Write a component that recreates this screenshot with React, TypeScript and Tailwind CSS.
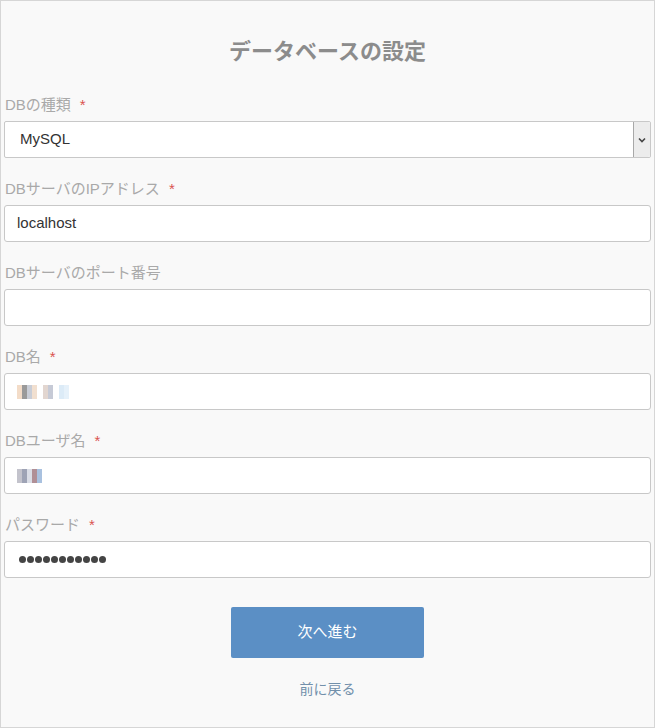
import { ReactNode } from "react";

const font = { fontFamily: '"Liberation Sans", "Noto Sans CJK JP", sans-serif' };

function Field({ label, required, children }: { label: string; required?: boolean; children: ReactNode }) {
  return (
    <div className="mb-[21px]">
      <div className="h-[20px] leading-[20px] text-[15px] text-[#a9a9a9] mb-[6px] pl-[1px]">
        {label}
        {required && <span className="ml-[9px] text-[#d9534f]">*</span>}
      </div>
      {children}
    </div>
  );
}

function Box({ children }: { children?: ReactNode }) {
  return (
    <div className="h-[37px] bg-white border border-[#c8c8c8] rounded-[3px] flex items-center pl-[12px] text-[15px] text-[#333]">
      {children}
    </div>
  );
}

// mosaic used to mask the real values in the screenshot
function Mosaic({ cells }: { cells: string[] }) {
  return (
    <div className="flex items-end">
      {cells.map((c, i) => (
        <span key={i} className="w-[5px] h-[14px]" style={{ background: c }} />
      ))}
    </div>
  );
}

export default function App() {
  return (
    <div style={font} className="w-[655px] h-[728px] border border-[#d6d6d6] bg-[#f9f9f9] px-[3px]">
      <h1 className="pt-[37px] pb-[29px] text-center text-[22px] leading-[28px] font-bold text-[#8c8c8c]">
        データベースの設定
      </h1>

      <Field label="DBの種類" required>
        <div className="h-[37px] bg-white border border-[#c8c8c8] rounded-[2px] flex items-stretch text-[15px] text-[#333]">
          <div className="flex-1 flex items-center pl-[15px]">MySQL</div>
          <div className="w-[17px] bg-[#ececec] border-l border-[#a8a8a8] rounded-r-[2px] flex items-center justify-center">
            <svg width="8" height="6" viewBox="0 0 8 6">
              <path d="M1 1.5 L4 4.5 L7 1.5" fill="none" stroke="#444" strokeWidth="1.6" />
            </svg>
          </div>
        </div>
      </Field>

      <Field label="DBサーバのIPアドレス" required>
        <Box>localhost</Box>
      </Field>

      <Field label="DBサーバのポート番号">
        <Box />
      </Field>

      <Field label="DB名" required>
        <Box>
          <div className="flex gap-[6px]">
            <Mosaic cells={["#f3dcc8", "#9a9a9a", "#c9cdd6", "#f1dfcf"]} />
            <Mosaic cells={["#e2d6d0", "#c6cad6"]} />
            <Mosaic cells={["#dcebf7", "#e6f1fa"]} />
          </div>
        </Box>
      </Field>

      <Field label="DBユーザ名" required>
        <Box>
          <Mosaic cells={["#c3c3cc", "#9ea3b5", "#dadde6", "#b08f96", "#a9c1df"]} />
        </Box>
      </Field>

      <Field label="パスワード" required>
        <Box>
          <div className="flex gap-[1px] pl-[2px]">
            {Array.from({ length: 11 }).map((_, i) => (
              <span key={i} className="w-[7px] h-[7px] rounded-full bg-[#444]" />
            ))}
          </div>
        </Box>
      </Field>

      <div className="flex flex-col items-center pt-[8px]">
        <button className="w-[193px] h-[51px] rounded-[2px] bg-[#5b8fc5] text-white text-[15px]">
          次へ進む
        </button>
        <a className="mt-[21px] text-[14px] text-[#7290ab]">前に戻る</a>
      </div>
    </div>
  );
}
